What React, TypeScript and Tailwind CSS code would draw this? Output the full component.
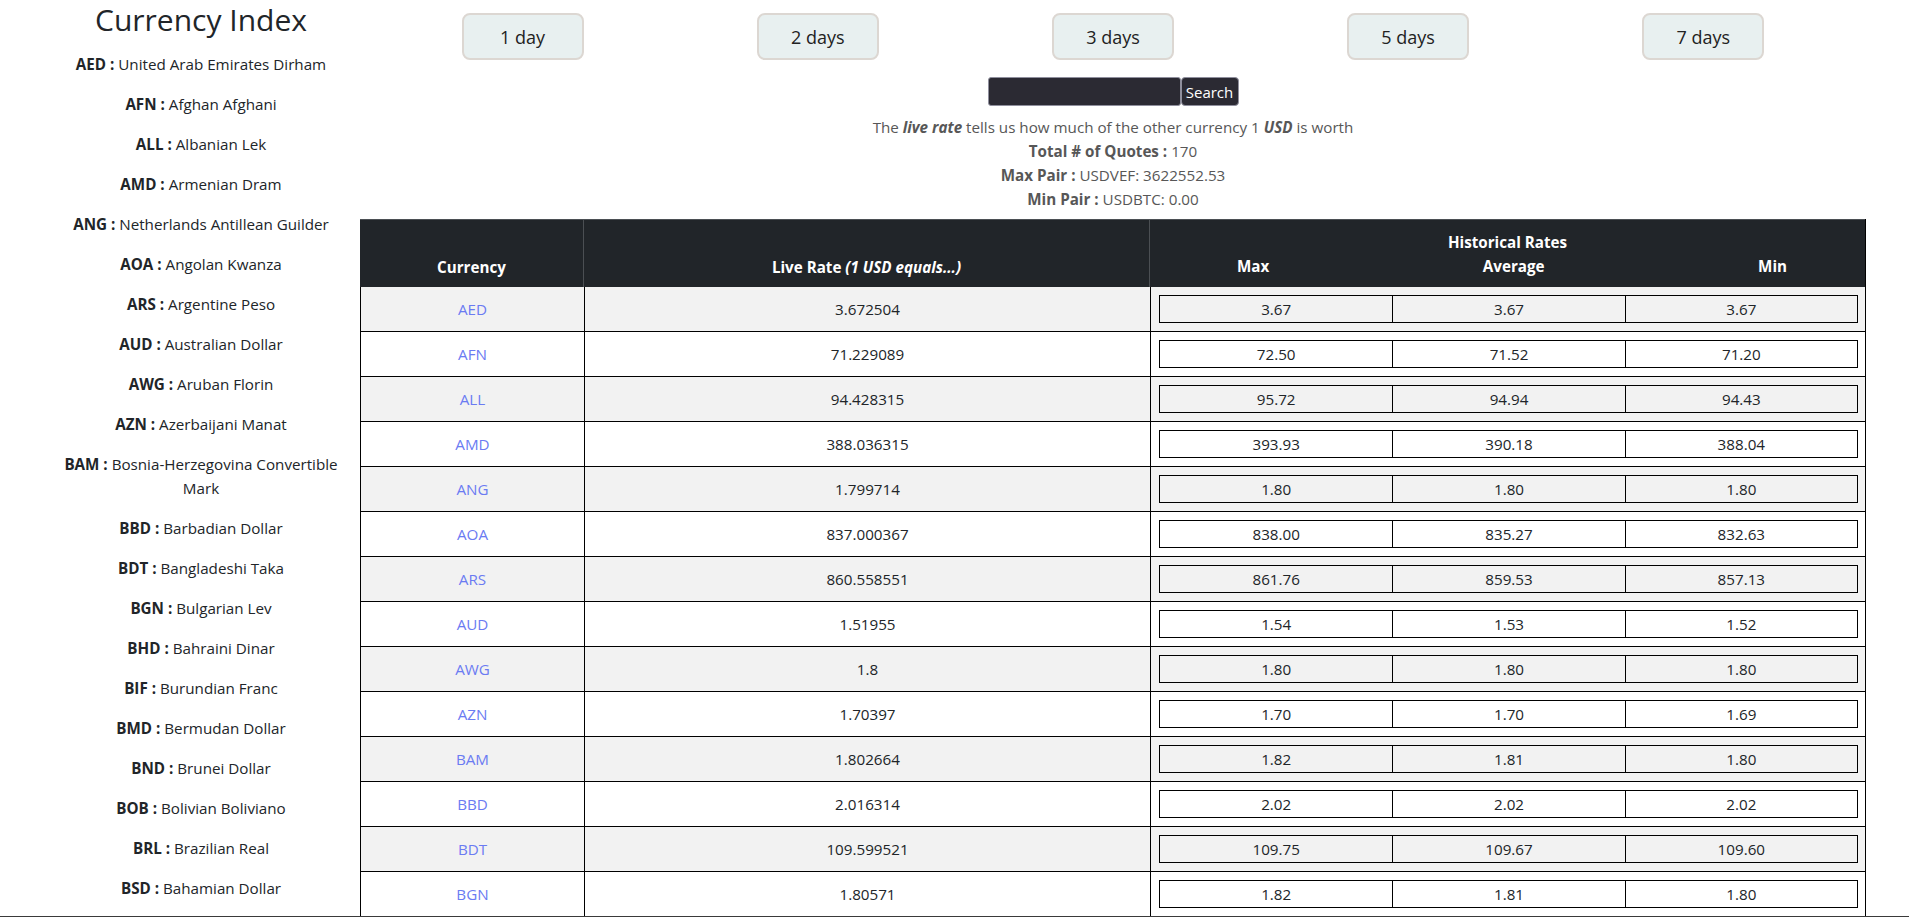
import React from "react";

const sidebar: [string, string][] = [
  ["AED", "United Arab Emirates Dirham"],
  ["AFN", "Afghan Afghani"],
  ["ALL", "Albanian Lek"],
  ["AMD", "Armenian Dram"],
  ["ANG", "Netherlands Antillean Guilder"],
  ["AOA", "Angolan Kwanza"],
  ["ARS", "Argentine Peso"],
  ["AUD", "Australian Dollar"],
  ["AWG", "Aruban Florin"],
  ["AZN", "Azerbaijani Manat"],
  ["BAM", "Bosnia-Herzegovina Convertible Mark"],
  ["BBD", "Barbadian Dollar"],
  ["BDT", "Bangladeshi Taka"],
  ["BGN", "Bulgarian Lev"],
  ["BHD", "Bahraini Dinar"],
  ["BIF", "Burundian Franc"],
  ["BMD", "Bermudan Dollar"],
  ["BND", "Brunei Dollar"],
  ["BOB", "Bolivian Boliviano"],
  ["BRL", "Brazilian Real"],
  ["BSD", "Bahamian Dollar"],
];

const rows: [string, string, string, string, string][] = [
  ["AED", "3.672504", "3.67", "3.67", "3.67"],
  ["AFN", "71.229089", "72.50", "71.52", "71.20"],
  ["ALL", "94.428315", "95.72", "94.94", "94.43"],
  ["AMD", "388.036315", "393.93", "390.18", "388.04"],
  ["ANG", "1.799714", "1.80", "1.80", "1.80"],
  ["AOA", "837.000367", "838.00", "835.27", "832.63"],
  ["ARS", "860.558551", "861.76", "859.53", "857.13"],
  ["AUD", "1.51955", "1.54", "1.53", "1.52"],
  ["AWG", "1.8", "1.80", "1.80", "1.80"],
  ["AZN", "1.70397", "1.70", "1.70", "1.69"],
  ["BAM", "1.802664", "1.82", "1.81", "1.80"],
  ["BBD", "2.016314", "2.02", "2.02", "2.02"],
  ["BDT", "109.599521", "109.75", "109.67", "109.60"],
  ["BGN", "1.80571", "1.82", "1.81", "1.80"],
];

const days = ["1 day", "2 days", "3 days", "5 days", "7 days"];

export default function App() {
  return (
    <div className="flex h-[917px] flex-col overflow-hidden bg-white text-[15.2px] leading-6 text-[#212529] [font-family:'Open_Sans',sans-serif]">
      <div className="flex h-[916px] overflow-hidden">
        {/* Sidebar */}
        <aside className="flex w-[360px] shrink-0 flex-col items-center pl-[51px] pr-[9px] text-center">
          <h2 className="pt-[2px] text-[30px] font-normal leading-[36px]">Currency Index</h2>
          <div className="mt-[14px] flex flex-col gap-4">
            {sidebar.map(([code, name]) => (
              <p key={code}>
                <b className="font-bold">{code} :</b> {name}
              </p>
            ))}
          </div>
        </aside>

        {/* Main */}
        <main className="flex min-w-0 flex-1 flex-col pr-[43px]">
          <div className="flex justify-around px-[15px] pt-[13px]">
            {days.map((d) => (
              <button
                key={d}
                className="h-[47px] w-[122px] rounded-lg border-2 border-[#dcd7d2] bg-[#e8f0f0] text-[18px] text-[#222]"
              >
                {d}
              </button>
            ))}
          </div>

          <div className="mt-[17px] flex justify-center">
            <input className="h-[29px] w-[193px] rounded-[3px] border border-[#8f8f9d] bg-[#2b2a33] px-1 text-white" />
            <button className="h-[29px] w-[58px] rounded-[4px] border border-[#8f8f9d] bg-[#2b2a33] text-[15px] text-white">
              Search
            </button>
          </div>

          <div className="mt-[9px] text-center text-[#575757]">
            <div>
              The <b className="italic">live rate</b> tells us how much of the other currency 1{" "}
              <b className="italic">USD</b> is worth
            </div>
            <div>
              <b>Total # of Quotes :</b> 170
            </div>
            <div>
              <b>Max Pair :</b> USDVEF: 3622552.53
            </div>
            <div>
              <b>Min Pair :</b> USDBTC: 0.00
            </div>
          </div>

          {/* Table */}
          <div className="mt-2 border-r border-black">
            <div className="grid h-[68px] grid-cols-[223px_566px_1fr] border-t border-[#4b4f53] bg-[#212529] font-bold text-white">
              <div className="flex items-end justify-center pb-2">Currency</div>
              <div className="flex items-end justify-center border-l border-[#4b4f53] pb-2">
                <span>
                  Live Rate <i>(1 USD equals...)</i>
                </span>
              </div>
              <div className="flex flex-col justify-end border-l border-[#4b4f53] pb-[9px]">
                <div className="text-center">Historical Rates</div>
                <div className="flex justify-between pl-[87px] pr-[78px]">
                  <span>Max</span>
                  <span>Average</span>
                  <span>Min</span>
                </div>
              </div>
            </div>
            {rows.map(([code, live, max, avg, min], i) => (
              <div
                key={code}
                className={`grid h-[45px] grid-cols-[223px_566px_1fr] border-b border-l border-black ${
                  i % 2 === 0 ? "bg-[#f2f2f2]" : "bg-white"
                }`}
              >
                <div className="flex items-center justify-center">
                  <a className="text-[#6b7bf2]">{code}</a>
                </div>
                <div className="flex items-center justify-center border-l border-black">{live}</div>
                <div className="flex items-center border-l border-black pl-2 pr-[7px]">
                  <div className="grid h-[28px] w-full grid-cols-3 border border-black">
                    <div className="flex items-center justify-center">{max}</div>
                    <div className="flex items-center justify-center border-l border-black">{avg}</div>
                    <div className="flex items-center justify-center border-l border-black">{min}</div>
                  </div>
                </div>
              </div>
            ))}
          </div>
        </main>
      </div>
      <div className="h-px bg-[#3a3a3a]" />
    </div>
  );
}
